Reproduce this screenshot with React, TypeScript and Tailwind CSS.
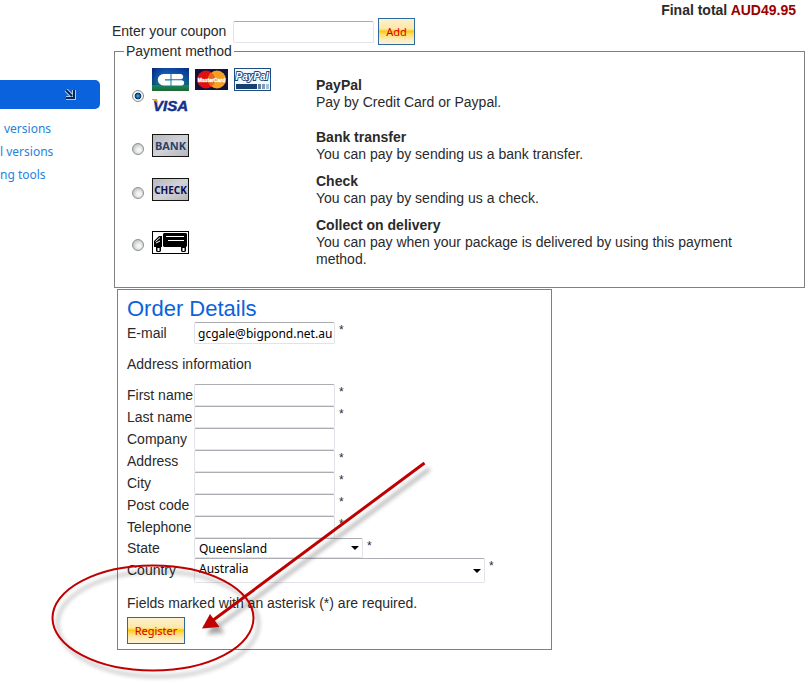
import type { ReactNode } from 'react';

const boxClass =
  'rounded-[2px] border border-[#e2e3ea] border-t-[#abadb3] bg-white font-[Noto_Sans,sans-serif] text-[12px] text-black outline-none focus:border-[#5794bf]';

const buttonClass =
  'h-[27px] border border-[#2f6a9f] bg-[linear-gradient(#fdf1cd_0%,#fce8ab_38%,#ffca08_50%,#fddc66_60%,#fdebb5_80%,#fdf3d6_100%)] font-[Noto_Sans,sans-serif] text-[11px] text-[#d40000]';

const links = ['versions', 'l versions', 'ng tools'];

const fields = [
  { id: 'first-name', label: 'First name', required: true },
  { id: 'last-name', label: 'Last name', required: true },
  { id: 'company', label: 'Company', required: false },
  { id: 'address', label: 'Address', required: true },
  { id: 'city', label: 'City', required: true },
  { id: 'post-code', label: 'Post code', required: true },
  { id: 'telephone', label: 'Telephone', required: true },
];

function CarteBleueLogo() {
  return (
    <svg width="37" height="23" viewBox="0 0 37 23" aria-label="Carte Bleue">
      <defs>
        <linearGradient id="cb" x1="0" y1="0" x2="0" y2="1">
          <stop offset="0" stopColor="#0b2f8c" />
          <stop offset="0.4" stopColor="#1769b8" />
          <stop offset="0.65" stopColor="#178c8c" />
          <stop offset="1" stopColor="#1c6a28" />
        </linearGradient>
        <linearGradient id="cb-shade" x1="0" y1="0" x2="1" y2="0">
          <stop offset="0" stopColor="#001a70" stopOpacity="0.6" />
          <stop offset="0.4" stopColor="#1a7fd0" stopOpacity="0.25" />
          <stop offset="1" stopColor="#002878" stopOpacity="0.5" />
        </linearGradient>
      </defs>
      <rect width="37" height="23" fill="url(#cb)" />
      <rect width="37" height="17" fill="url(#cb-shade)" />
      <path d="M18.500 6H11.500A5.700 5.700 0 0 0 11.500 17.400H18.500V12.600H13V11.200H18.500Z" fill="#fff" />
      <path d="M19.500 6H29A2.700 2.700 0 0 1 29 11.300H19.500Z" fill="#fff" />
      <path d="M19.500 12.200H29.500A2.600 2.600 0 0 1 29.500 17.400H19.500Z" fill="#fff" />
    </svg>
  );
}

function MasterCardLogo() {
  return (
    <svg width="33" height="23" viewBox="0 0 33 23" aria-label="MasterCard">
      <rect y="1" width="33" height="21" fill="#12123c" />
      <circle cx="11" cy="11.500" r="9" fill="#e01010" />
      <circle cx="22" cy="11.500" r="9" fill="#f7a01c" />
      <path d="M16.500 4.400A9 9 0 0 1 16.500 18.600A9 9 0 0 1 16.500 4.400" fill="#e8641c" />
      <text
        x="16.500"
        y="13.500"
        textAnchor="middle"
        fill="#fff"
        stroke="#fff"
        strokeWidth="0.300"
        className="font-[Liberation_Sans,sans-serif] text-[5px] font-bold"
      >
        MasterCard
      </text>
    </svg>
  );
}

function PayPalLogo() {
  return (
    <svg width="37" height="23" viewBox="0 0 37 23" aria-label="PayPal">
      <rect x="0.500" y="0.500" width="36" height="22" fill="#f3f8fc" stroke="#1f4f80" />
      <text
        x="18"
        y="12"
        textAnchor="middle"
        fill="#fff"
        stroke="#1f4574"
        strokeWidth="1.800"
        paintOrder="stroke"
        className="font-[Liberation_Sans,sans-serif] text-[10px] font-bold italic"
      >
        PayPal
      </text>
      <rect x="2" y="16" width="21" height="5" fill="#173f70" />
      <rect x="24" y="16" width="3" height="5" fill="#5f83a8" />
      <rect x="28" y="16" width="3" height="5" fill="#7f9cba" />
      <rect x="32" y="16" width="3" height="5" fill="#a9bfd3" />
    </svg>
  );
}

function VisaLogo() {
  return (
    <svg width="37" height="23" viewBox="0 0 37 23" aria-label="Visa">
      <text
        x="18.500"
        y="18"
        textAnchor="middle"
        fill="#14308c"
        className="font-[Liberation_Sans,sans-serif] text-[15px] font-bold italic"
        stroke="#14308c"
        strokeWidth="0.500"
      >
        VISA
      </text>
      <path d="M0 6H5L6.500 12C5 9 3 7.500 0 6.800Z" fill="#f0a020" />
    </svg>
  );
}

function WordLogo({ word, color }: { word: string; color: string }) {
  return (
    <svg width="37" height="24" viewBox="0 0 37 24" aria-label={word}>
      <defs>
        <linearGradient id={`bg-${word}`} x1="0" y1="0" x2="1" y2="1">
          <stop offset="0" stopColor="#b4b6ba" />
          <stop offset="0.5" stopColor="#d2d3d6" />
          <stop offset="1" stopColor="#b4b6ba" />
        </linearGradient>
      </defs>
      <rect x="0.500" y="0.500" width="36" height="22" fill={`url(#bg-${word})`} stroke="#151515" />
      <text
        x="18.500"
        y="15.500"
        textAnchor="middle"
        fill={color}
        className={`font-[Noto_Sans,sans-serif] font-bold ${word === 'BANK' ? 'text-[11px]' : 'text-[10px]'}`}
      >
        {word}
      </text>
    </svg>
  );
}

function TruckLogo() {
  return (
    <svg width="37" height="24" viewBox="0 0 37 24" aria-label="Delivery truck">
      <rect x="0.500" y="0.500" width="36" height="22" fill="#fff" stroke="#000" />
      <path d="M11 3L12 2H34L35 3V15L34 16H12L11 15Z" fill="#000" />
      <path d="M14 5.500H32M16 9.500H32" stroke="#fff" strokeWidth="1" />
      <path d="M2 16V10L7 5H10V16Z" fill="#000" />
      <path d="M3.500 10.500L8 6.500M4 12L8 10" stroke="#fff" strokeWidth="1" />
      <path d="M4 16H9V20L8 21H5L4 20ZM29 16H34V20L33 21H30L29 20Z" fill="#000" />
      <path d="M5.500 17H7.500V20H5.500ZM30.500 17H32.500V20H30.500Z" fill="#fff" />
    </svg>
  );
}

type MethodProps = {
  id: string;
  title: string;
  text: string;
  checked?: boolean;
  children: ReactNode;
};

function PaymentMethod({ id, title, text, checked, children }: MethodProps) {
  return (
    <div className="flex items-center">
      <input
        type="radio"
        name="payment"
        id={id}
        defaultChecked={checked}
        className="mt-[5px] mr-2 size-3 shrink-0 appearance-none rounded-full border border-[#8e8f8f] bg-[radial-gradient(circle_at_60%_60%,#f4f4f4_20%,#c4c7ca_70%)] checked:bg-[radial-gradient(circle,#4fc0f0_0%,#1668a8_25%,#0b3660_42%,#f2f2f2_52%)]"
      />
      <div className="w-[164px] shrink-0">{children}</div>
      <label htmlFor={id}>
        <span className="block font-bold">{title}</span>
        {text}
      </label>
    </div>
  );
}

function Star() {
  return <span className="ml-1 self-start text-[12px]">*</span>;
}

function Select({ id, value, width, tall }: { id: string; value: string; width: string; tall?: boolean }) {
  return (
    <div className={`relative ${width}`}>
      <select
        id={id}
        defaultValue={value}
        className={`${boxClass} block w-full appearance-none pl-1 ${tall ? 'h-[25px] pb-1' : 'h-5'}`}
      >
        <option>{value}</option>
      </select>
      <svg
        width="8"
        height="4"
        viewBox="0 0 8 4"
        className="pointer-events-none absolute inset-y-0 right-1 my-auto"
      >
        <path d="M0 0H8L4 4Z" fill="#000" />
      </svg>
    </div>
  );
}

// red ellipse and arrow pointing at the register button
function Callout() {
  return (
    <svg
      width="400"
      height="230"
      viewBox="40 453 400 230"
      className="pointer-events-none absolute top-[453px] left-10"
      aria-hidden="true"
    >
      <defs>
        <filter id="shadow" x="-10%" y="-10%" width="120%" height="120%">
          <feDropShadow dx="5" dy="6" stdDeviation="2" floodColor="#000" floodOpacity="0.35" />
        </filter>
      </defs>
      <g filter="url(#shadow)">
        <ellipse cx="153" cy="618" rx="100.500" ry="52.500" fill="none" stroke="#c00000" strokeWidth="2" />
        <path d="M424.500 463L212 621" stroke="#c00000" strokeWidth="3" />
        <path d="M202 628.500L210 614L219.500 627Z" fill="#c00000" />
      </g>
    </svg>
  );
}

export default function App() {
  return (
    <div className="relative flex bg-white pb-8 font-[Liberation_Sans,Arial,sans-serif] text-[14px] leading-[17px] text-[#2a2a2a]">
      <aside className="w-[100px] shrink-0 overflow-hidden pt-20 font-[Noto_Sans,sans-serif] text-[12px]">
        <div className="flex h-[29px] items-center justify-end rounded-r-[5px] bg-[#0a63dc] pr-6">
          <svg width="12" height="12" viewBox="0 0 12 12">
            <path d="M2 1L8 7M10 1V9H2" fill="none" stroke="#a9cdf5" strokeWidth="4" />
            <path d="M2 1L8 7M10 1V9H2" fill="none" stroke="#0a2450" strokeWidth="2" />
          </svg>
        </div>
        <ul className="mt-2 leading-[23px] whitespace-nowrap">
          {links.map((link) => (
            <li key={link} className={link === 'versions' ? 'pl-1' : ''}>
              <a href="#" className="text-[#2583dc]">
                {link}
              </a>
            </li>
          ))}
        </ul>
      </aside>

      <main className="ml-3 min-w-0 flex-1 pr-[3px]">
        <p className="h-5 pt-[2px] pr-[9px] text-right font-bold">
          Final total <span className="text-[#990000]">AUD49.95</span>
        </p>

        <div className="flex h-[23px] items-center">
          <label htmlFor="coupon" className="w-[121px]">
            Enter your coupon
          </label>
          <input id="coupon" type="text" className={`${boxClass} h-[22px] w-[141px] pl-[3px]`} />
          <button type="button" className={`${buttonClass} ml-1 w-[37px] shrink-0`}>
            Add
          </button>
        </div>

        <fieldset className="ml-[2px] border border-[#808080] pr-5 pb-[19px] pl-[9px]">
          <legend className="px-[2px]">Payment method</legend>
          <div className="flex flex-col gap-[10px] pt-2 pl-2">
            <PaymentMethod id="paypal" title="PayPal" text="Pay by Credit Card or Paypal." checked>
              <div className="flex h-[51px] flex-wrap content-start gap-x-[6px] gap-y-[2px] pr-8">
                <CarteBleueLogo />
                <MasterCardLogo />
                <PayPalLogo />
                <VisaLogo />
              </div>
            </PaymentMethod>
            <PaymentMethod id="bank" title="Bank transfer" text="You can pay by sending us a bank transfer.">
              <WordLogo word="BANK" color="#2b426f" />
            </PaymentMethod>
            <PaymentMethod id="check" title="Check" text="You can pay by sending us a check.">
              <WordLogo word="CHECK" color="#0c0c50" />
            </PaymentMethod>
            <PaymentMethod
              id="cod"
              title="Collect on delivery"
              text="You can pay when your package is delivered by using this payment method."
            >
              <TruckLogo />
            </PaymentMethod>
          </div>
        </fieldset>

        <form className="mt-px ml-[5px] max-w-[435px] border border-[#808080] px-[9px] pt-[6px] pb-[5px]">
          <h2 className="text-[22px] leading-[26px] text-[#0a63dc]">Order Details</h2>
          <div className="flex h-[22px] items-center">
            <label htmlFor="email" className="w-[67px]">
              E-mail
            </label>
            <input
              id="email"
              type="text"
              defaultValue="gcgale@bigpond.net.au"
              className={`${boxClass} h-[22px] w-[141px] pl-[3px]`}
            />
            <Star />
          </div>

          <p className="mt-3 mb-[11px]">Address information</p>

          {fields.map((field) => (
            <div key={field.id} className="flex h-[22px] items-center">
              <label htmlFor={field.id} className="w-[67px]">
                {field.label}
              </label>
              <input id={field.id} type="text" className={`${boxClass} h-[22px] w-[141px] pl-[3px]`} />
              {field.required && <Star />}
            </div>
          ))}
          <div className="flex items-center">
            <label htmlFor="state" className="w-[67px]">
              State
            </label>
            <Select id="state" value="Queensland" width="w-[169px]" />
            <Star />
          </div>
          <div className="flex items-center">
            <label htmlFor="country" className="w-[67px]">
              Country
            </label>
            <Select id="country" value="Australia" width="w-[291px]" tall />
            <Star />
          </div>

          <p className="mt-3 mb-[5px]">Fields marked with an asterisk (*) are required.</p>
          <button type="button" className={`${buttonClass} block w-[58px]`}>
            Register
          </button>
        </form>
      </main>

      <Callout />
    </div>
  );
}
